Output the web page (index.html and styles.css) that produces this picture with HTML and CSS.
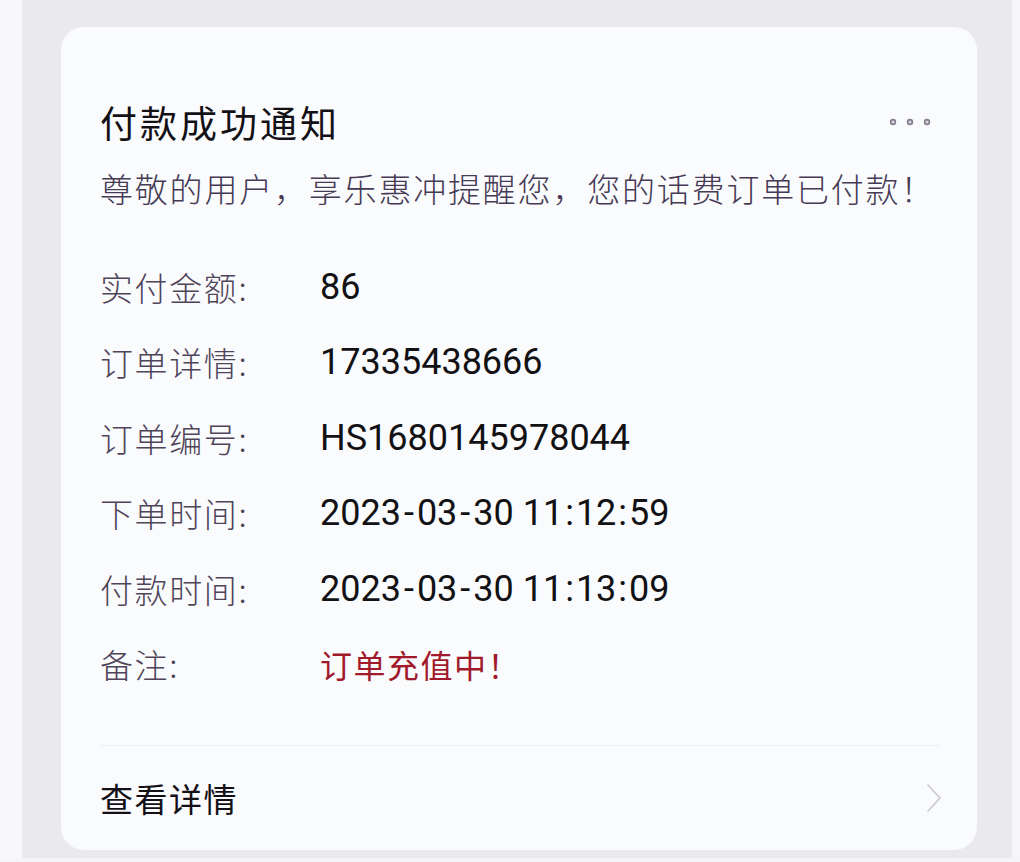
FILE: index.html
```html
<!DOCTYPE html>
<html lang="zh-CN">
<head>
<meta charset="utf-8">
<title>付款成功通知</title>
<link rel="stylesheet" href="styles.css">
</head>
<body>
<div class="page">
  <div class="card">
    <div class="head">
      <div class="title">付款成功通知</div>
      <svg class="dots" width="44" height="10" viewBox="0 0 44 10" aria-hidden="true">
        <circle cx="5" cy="5" r="2.4" />
        <circle cx="22" cy="5" r="2.4" />
        <circle cx="39" cy="5" r="2.4" />
      </svg>
    </div>
    <div class="subtitle">尊敬的用户，享乐惠冲提醒您，您的话费订单已付款！</div>
    <div class="rows">
      <div class="row"><span class="label">实付金额:</span><span class="value">86</span></div>
      <div class="row"><span class="label">订单详情:</span><span class="value">17335438666</span></div>
      <div class="row"><span class="label">订单编号:</span><span class="value">HS1680145978044</span></div>
      <div class="row"><span class="label">下单时间:</span><span class="value">2023<span class="sep">-</span>03<span class="sep">-</span>30 11<span class="col">:</span>12<span class="col">:</span>59</span></div>
      <div class="row"><span class="label">付款时间:</span><span class="value">2023<span class="sep">-</span>03<span class="sep">-</span>30 11<span class="col">:</span>13<span class="col">:</span>09</span></div>
      <div class="row"><span class="label">备注:</span><span class="value red">订单充值中！</span></div>
    </div>
    <div class="divider"></div>
    <div class="footer">
      <span class="more">查看详情</span>
      <svg class="chev" width="16" height="30" viewBox="0 0 16 30" aria-hidden="true">
        <path d="M2 2 L14 15 L2 28" />
      </svg>
    </div>
  </div>
</div>
</body>
</html>
```
FILE: styles.css
```css
html, body {
  margin: 0;
  padding: 0;
}
body {
  width: 1020px;
  height: 862px;
  overflow: hidden;
  background: #eaeaed;
  font-family: "Noto Sans CJK SC", "Noto Sans", sans-serif;
}
.page {
  box-sizing: border-box;
  height: 862px;
  border-left: 22px solid #f8f8fa;
  border-right: 8px solid #f6f6f8;
  border-bottom: 4px solid #f4f4f6;
  padding: 27px 0 0 39px;
}
.card {
  box-sizing: border-box;
  width: 916px;
  height: 823px;
  background: #fafbfd;
  border-radius: 23px;
  padding: 73px 37px 0 39px;
  display: flex;
  flex-direction: column;
}
.head {
  display: flex;
  align-items: center;
  justify-content: space-between;
  height: 44px;
}
.title {
  font-size: 37px;
  line-height: 44px;
  letter-spacing: 3px;
  color: #131116;
  font-weight: 400;
}
.dots {
  margin-right: 8px;
}
.dots circle {
  fill: #d8d4dc;
  stroke: #857c8e;
  stroke-width: 1.6;
}
.subtitle {
  margin-top: 22px;
  font-size: 33px;
  line-height: 44px;
  letter-spacing: 1.8px;
  color: #463a55;
  font-weight: 300;
  white-space: nowrap;
}
.rows {
  margin-top: 39px;
  display: flex;
  flex-direction: column;
}
.row {
  display: flex;
  align-items: center;
  height: 75.5px;
}
.label {
  width: 220px;
  flex: none;
  font-size: 33px;
  letter-spacing: 1.6px;
  color: #4f4459;
  font-weight: 300;
}
.value {
  font-family: Roboto, "Noto Sans CJK SC", sans-serif;
  font-size: 36px;
  color: #121114;
  white-space: pre;
}
.sep {
  margin: 0 3px;
}
.col {
  margin: 0 2px;
}
.value.red {
  font-family: "Noto Sans CJK SC", sans-serif;
  font-size: 32px;
  letter-spacing: 1.5px;
  color: #a11a2c;
  font-weight: 400;
}
.divider {
  margin-top: 43px;
  height: 1px;
  background: #eeeff3;
}
.footer {
  height: 103px;
  display: flex;
  align-items: center;
  justify-content: space-between;
}
.more {
  font-size: 33px;
  letter-spacing: 1.5px;
  color: #131116;
}
.chev {
  margin-right: -2px;
}
.chev path {
  fill: none;
  stroke: #c9c9ce;
  stroke-width: 1.6;
  stroke-linecap: round;
  stroke-linejoin: round;
}
```
